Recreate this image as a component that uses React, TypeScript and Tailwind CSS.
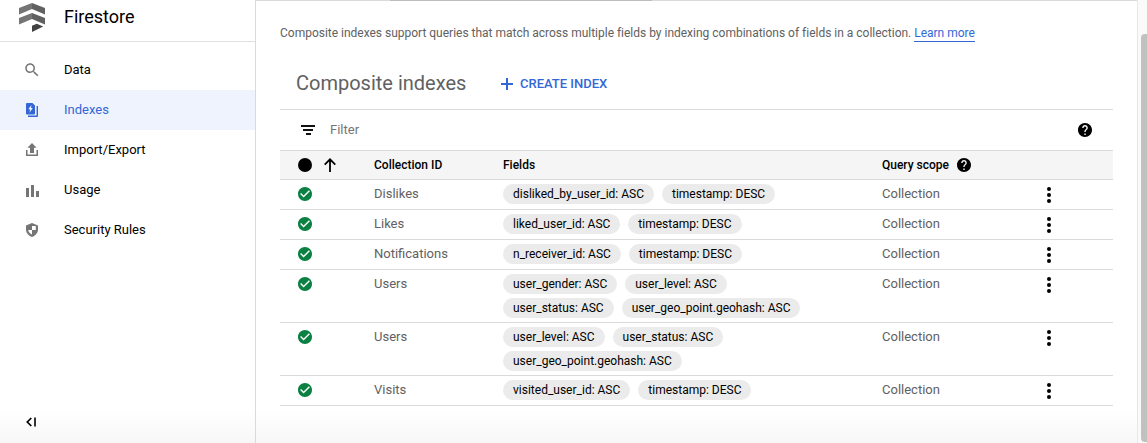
import type { ReactNode } from "react";

type IconProps = { d: string; viewBox?: string; className?: string };

function Icon({ d, viewBox = "0 0 24 24", className = "" }: IconProps) {
  return (
    <svg viewBox={viewBox} fill="currentColor" fillRule="evenodd" className={`shrink-0 ${className}`}>
      <path d={d} />
    </svg>
  );
}

const ROUND_BOX = "2 2 20 20";
const HELP =
  "M12 2C6.48 2 2 6.48 2 12s4.48 10 10 10 10-4.48 10-10S17.52 2 12 2zm1 17h-2v-2h2v2zm2.07-7.75l-.9.92C13.45 12.9 13 13.5 13 15h-2v-.5c0-1.1.45-2.1 1.17-2.83l1.24-1.26c.37-.36.59-.86.59-1.41 0-1.1-.9-2-2-2s-2 .9-2 2H8c0-2.21 1.79-4 4-4s4 1.79 4 4c0 .88-.36 1.68-.93 2.25z";
const CHECK =
  "M12 2C6.48 2 2 6.48 2 12s4.48 10 10 10 10-4.48 10-10S17.52 2 12 2zm-2 15l-5-5 1.41-1.41L10 14.17l7.59-7.59L19 8l-9 9z";
const SEARCH =
  "M15.5 14h-.79l-.28-.27C15.41 12.59 16 11.11 16 9.5 16 5.91 13.09 3 9.5 3S3 5.91 3 9.5 5.91 16 9.5 16c1.61 0 3.09-.59 4.23-1.57l.27.28v.79l5 4.99L20.49 19l-4.99-5zm-6 0C7.01 14 5 11.99 5 9.5S7.01 5 9.5 5 14 7.01 14 9.5 11.99 14 9.5 14z";

function FirestoreLogo() {
  return (
    <svg viewBox="0 0 26 30" className="h-[30px] w-[26px] shrink-0">
      <path d="M13 0v6L0 11.400V5z" fill="#757575" />
      <path d="M13 0v6l13 5.400V5z" fill="#616161" />
      <path d="M13 10v6L0 21.500V15z" fill="#757575" />
      <path d="M13 10v6l13 5.500V15z" fill="#616161" />
      <path d="M13 22.800l4.800-2 6.400 2.800L13 29z" fill="#424242" />
    </svg>
  );
}

function NavItem({ icon, label, active = false }: { icon: ReactNode; label: string; active?: boolean }) {
  return (
    <a
      className={`flex h-10 items-center pl-6 ${active ? "bg-[#eff3fd] text-[#3367d6]" : "text-black"}`}
    >
      <span className={`flex w-10 items-center ${active ? "text-[#3367d6]" : "text-[#757575]"}`}>{icon}</span>
      <span className="text-[13px]">{label}</span>
    </a>
  );
}

function Sidebar() {
  return (
    <aside className="flex w-64 shrink-0 flex-col border-r border-[#dadada]">
      <div className="flex h-[42px] items-start border-b border-[#e0e0e0] pl-[19px] pt-[3px]">
        <FirestoreLogo />
        <h1 className="ml-[19px] text-[18px] font-normal leading-7 text-black">Firestore</h1>
      </div>
      <nav className="flex flex-col pt-2">
        <NavItem icon={<Icon d={SEARCH} className="-ml-px size-[18px]" />} label="Data" />
        <NavItem
          active
          icon={
            <svg viewBox="0 0 16 16" className="size-4">
              <path
                fillRule="evenodd"
                fill="currentColor"
                d="M3 1h5.500L11 3.500v8a1 1 0 0 1-1 1H3a1 1 0 0 1-1-1V2a1 1 0 0 1 1-1zM7.400 3L4.300 7.300h1.800l-.6 3.400 3.200-4.700H7z"
              />
              <path d="M12.600 4H14v10a1 1 0 0 1-1 1H4v-1.400h8.600z" fill="currentColor" />
            </svg>
          }
          label="Indexes"
        />
        <NavItem
          icon={
            <svg viewBox="0 0 16 16" className="size-4" fill="currentColor">
              <path d="M8 1l4.600 4.800H10V11H6V5.800H3.400z" />
              <path d="M2 8h1.500v4.600h9V8H14v6H2z" />
            </svg>
          }
          label="Import/Export"
        />
        <NavItem
          icon={
            <svg viewBox="0 0 16 16" className="size-4" fill="currentColor">
              <path d="M2 6h3v9H2zM7 3h3v12H7zM12 9h3v6h-3z" />
            </svg>
          }
          label="Usage"
        />
        <NavItem
          icon={
            <svg viewBox="0 0 16 16" className="size-4" fill="currentColor" fillRule="evenodd">
              <path d="M8 1l6 2.400v4.200c0 3.400-2.600 6.400-6 7.400-3.400-1-6-4-6-7.400V3.400zM8 4v4H4.200c.3 2 1.800 3.800 3.800 4.500V8h3.800V4H8z" />
            </svg>
          }
          label="Security Rules"
        />
      </nav>
      <button className="mb-[15px] ml-[26px] mt-auto flex h-3 w-3 items-center text-black">
        <svg viewBox="0 0 12 12" className="size-3" fill="none" stroke="currentColor">
          <path d="M5.300 2L1.300 6l4 4" strokeWidth="1.700" />
          <path d="M9 1.500v9" strokeWidth="2" stroke="#333" />
        </svg>
      </button>
    </aside>
  );
}

type Row = { id: string; fields: string[] };

const rows: Row[] = [
  { id: "Dislikes", fields: ["disliked_by_user_id: ASC", "timestamp: DESC"] },
  { id: "Likes", fields: ["liked_user_id: ASC", "timestamp: DESC"] },
  { id: "Notifications", fields: ["n_receiver_id: ASC", "timestamp: DESC"] },
  {
    id: "Users",
    fields: ["user_gender: ASC", "user_level: ASC", "user_status: ASC", "user_geo_point.geohash: ASC"],
  },
  { id: "Users", fields: ["user_level: ASC", "user_status: ASC", "user_geo_point.geohash: ASC"] },
  { id: "Visits", fields: ["visited_user_id: ASC", "timestamp: DESC"] },
];

function IndexRow({ id, fields }: Row) {
  return (
    <div className="grid min-h-[30px] grid-cols-[94px_129px_379px_157px_1fr] items-start border-b border-[#dadada] text-[13px] leading-5 text-[#616161]">
      <span className="flex pl-[18px] pt-[7px]">
        <Icon d={CHECK} viewBox={ROUND_BOX} className="size-3.5 text-[#0b8043]" />
      </span>
      <span className="pt-1">{id}</span>
      <div className="flex max-w-[310px] flex-wrap gap-x-2 gap-y-1 py-1">
        {fields.map((field) => (
          <span key={field} className="h-5 rounded-full bg-[#ebebeb] px-2.5 text-[12px] text-black">
            {field}
          </span>
        ))}
      </div>
      <span className="pt-1">Collection</span>
      <button className="ml-2 mt-[7px] h-4 w-1 text-black">
        <svg viewBox="0 0 4 16" className="h-4 w-1" fill="currentColor">
          <circle cx="2" cy="2" r="2" />
          <circle cx="2" cy="8" r="2" />
          <circle cx="2" cy="14" r="2" />
        </svg>
      </button>
    </div>
  );
}

export default function App() {
  return (
    <div className="flex h-[443px] w-[1147px] overflow-hidden bg-[linear-gradient(to_bottom,#fff_410px,#f7f7f7_443px)] font-[Roboto,sans-serif]">
      <Sidebar />
      <main className="flex min-w-0 flex-1 flex-col">
        <div className="flex h-px bg-[#dadada] pl-[134px]">
          <div className="h-px w-[262px] bg-[#bdbdbd]" />
        </div>
        <div className="flex flex-col pl-6 pr-6">
          <p className="mt-6 h-4 whitespace-nowrap text-[12px] leading-4 tracking-[-0.01px] text-[#616161]">
            Composite indexes support queries that match across multiple fields by indexing combinations of fields in a
            collection.{" "}
            <a className="inline-block border-b border-[#3367d6] text-[#3367d6]">Learn more</a>
          </p>
          <div className="flex h-[69px] items-center border-b border-[#dadada] pl-4 pt-[17px]">
            <h2 className="w-[205px] pb-px text-[20px] font-normal text-[#616161]">Composite indexes</h2>
            <button className="flex items-center gap-[7px] text-[13px] font-medium text-[#3367d6]">
              <svg viewBox="0 0 12 12" className="size-3" stroke="currentColor" strokeWidth="2">
                <path d="M6 0v12M0 6h12" />
              </svg>
              <span>CREATE INDEX</span>
            </button>
          </div>
          <div className="flex h-10 items-center pl-[21px] pr-[21px]">
            <svg viewBox="0 0 14 10" className="h-2.5 w-3.5" fill="#111">
              <path d="M0 0h14v2H0zM2 4h10v2H2zM5 8h5v2H5z" />
            </svg>
            <span className="ml-[15px] text-[13px] text-[#757575]">Filter</span>
            <Icon d={HELP} viewBox={ROUND_BOX} className="ml-auto size-3.5 text-black" />
          </div>
          <div className="grid h-[30px] grid-cols-[94px_129px_379px_1fr] items-center border-y border-[#dadada] bg-[#f5f5f5] text-[12px] font-medium text-black">
            <span className="flex items-center gap-3 pl-[18px]">
              <i className="size-3.5 rounded-full bg-black" />
              <svg viewBox="0 0 12 14" className="h-3.5 w-3" fill="none" stroke="currentColor" strokeWidth="1.8">
                <path d="M6 14V1.500M.7 6.600L6 1.300l5.300 5.300" />
              </svg>
            </span>
            <span>Collection ID</span>
            <span>Fields</span>
            <span className="flex items-center gap-2">
              Query scope
              <Icon d={HELP} viewBox={ROUND_BOX} className="size-3.5" />
            </span>
          </div>
          {rows.map((row, index) => (
            <IndexRow key={index} {...row} />
          ))}
        </div>
      </main>
      <div className="flex w-2.5 shrink-0 flex-col border-l border-[#e8e8e8] bg-[#fafafa] pl-[3px] pt-[34px]">
        <div className="h-[408px] rounded-l-[4px] bg-[#c1c1c1]" />
      </div>
    </div>
  );
}
